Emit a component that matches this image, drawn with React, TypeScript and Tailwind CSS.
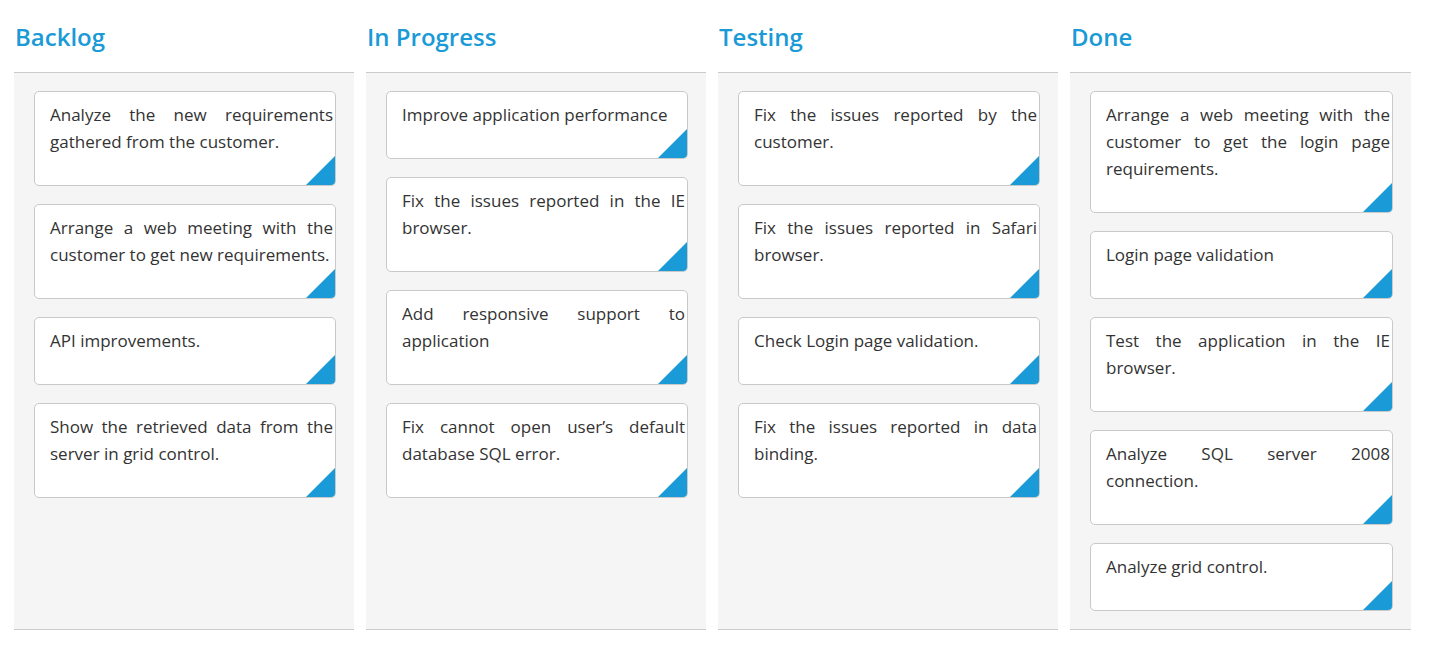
const columns = [
  {
    title: 'Backlog',
    cards: [
      'Analyze the new requirements gathered from the customer.',
      'Arrange a web meeting with the customer to get new requirements.',
      'API improvements.',
      'Show the retrieved data from the server in grid control.',
    ],
  },
  {
    title: 'In Progress',
    cards: [
      'Improve application performance',
      'Fix the issues reported in the IE browser.',
      'Add responsive support to application',
      'Fix cannot open user’s default database SQL error.',
    ],
  },
  {
    title: 'Testing',
    cards: [
      'Fix the issues reported by the customer.',
      'Fix the issues reported in Safari browser.',
      'Check Login page validation.',
      'Fix the issues reported in data binding.',
    ],
  },
  {
    title: 'Done',
    cards: [
      'Arrange a web meeting with the customer to get the login page requirements.',
      'Login page validation',
      'Test the application in the IE browser.',
      'Analyze SQL server 2008 connection.',
      'Analyze grid control.',
    ],
  },
]

const Card = ({ text }: { text: string }) => (
  <div className="relative overflow-hidden bg-white border border-[#c9c9c9] rounded-[5px] ml-5 mr-[18px] pl-[15px] pr-[2px] pt-[9px] pb-[30px]">
    <p className="text-[17px] leading-[27px] text-[#333333] text-justify">{text}</p>
    <div className="absolute right-0 bottom-0 w-[29px] h-[29px] bg-[#1a9ad6] [clip-path:polygon(100%_0,100%_100%,0_100%)]" />
  </div>
)

export default function App() {
  return (
    <div className="min-h-[647px] bg-white px-[14px] font-['Segoe_UI','Open_Sans',sans-serif]">
      <div className="flex gap-3">
        {columns.map((col, i) => (
          <div key={col.title} className={i === 3 ? 'w-[341px] flex flex-col' : 'w-[340px] flex flex-col'}>
            <div className="h-[73px] flex items-center border-b border-[#cccccc] pl-px">
              <h2 className="text-[24px] font-semibold text-[#1a9ad6] leading-none pt-[1px]">{col.title}</h2>
            </div>
            <div className="h-[557px] bg-[#f5f5f5] border-b border-[#cccccc] pt-[18px] flex flex-col gap-[18px]">
              {col.cards.map((c) => (
                <Card key={c} text={c} />
              ))}
            </div>
          </div>
        ))}
      </div>
    </div>
  )
}
